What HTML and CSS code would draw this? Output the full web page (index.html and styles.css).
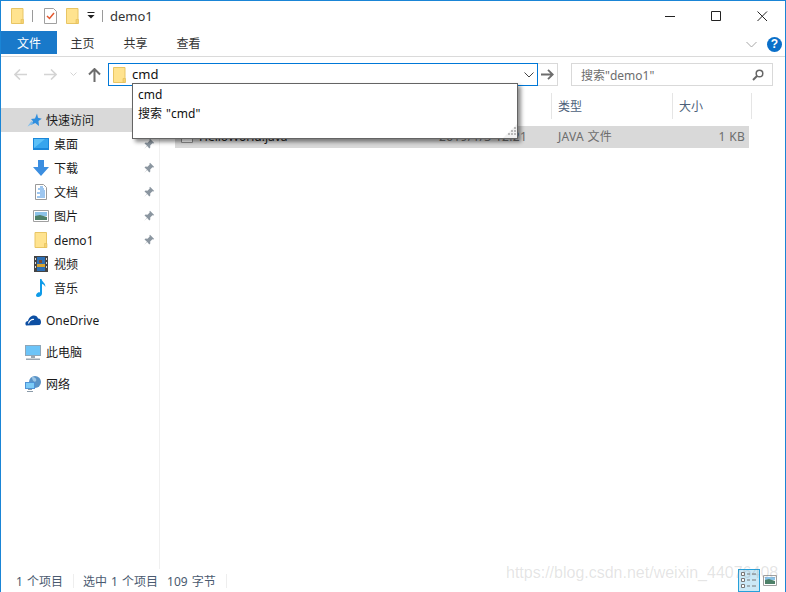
FILE: index.html
```html
<!DOCTYPE html>
<html lang="zh-CN">

<head>
  <meta charset="UTF-8" />
  <title>demo1</title>
  <link rel="stylesheet" href="styles.css">
</head>

<body>
  <svg class="defs" width="0" height="0">
    <symbol id="folder" viewBox="0 0 13 16">
      <path d="M.5.5h11.5v15H.5z" fill="#ffe38f" stroke="#e8c564" />
      <path d="M10 15.5v-4h2.500v4z" fill="#f5d271" stroke="#e3bd58" stroke-width=".6" />
    </symbol>
    <symbol id="pin" viewBox="0 0 12 12">
      <path d="M7 .8l4.200 4.200-1 .6-.8-.3-2.200 2.200.1 2-1 1-2.100-2.600L1 11l3-3.300L1.500 5.600l1-1 2 .1 2.200-2.200-.3-.8z" fill="#8b96a0" />
    </symbol>
  </svg>

  <div class="window">
    <div class="titlebar">
      <svg class="qa-folder" width="13" height="16"><use href="#folder" /></svg>
      <span class="qa-sep"></span>
      <svg class="qa-check" width="13" height="16" viewBox="0 0 13 16">
        <path d="M.5.500h9l3 3v12H.5z" fill="#fff" stroke="#a0a0a0" />
        <path d="M3 8l2.500 2.500L10 5" fill="none" stroke="#e4572e" stroke-width="1.500" />
      </svg>
      <svg class="qa-folder2" width="13" height="16"><use href="#folder" /></svg>
      <svg class="qa-more" width="8" height="8" viewBox="0 0 8 8">
        <path d="M.5 0h7v1h-7zM.5 3h7L4 6.500z" fill="#222" />
      </svg>
      <span class="qa-sep sep2"></span>
      <span class="title-text">demo1</span>
      <div class="win-btns">
        <svg width="11" height="11" viewBox="0 0 11 11"><path d="M0 5.500h10" stroke="#222" fill="none" /></svg>
        <svg width="11" height="11" viewBox="0 0 11 11"><path d="M.5.500h9v9h-9z" stroke="#222" fill="none" /></svg>
        <svg width="11" height="11" viewBox="0 0 11 11"><path d="M.5.500l9.500 9.500M10 .5L.5 10" stroke="#222" fill="none" /></svg>
      </div>
    </div>

    <div class="ribbon">
      <div class="tab tab-file">文件</div>
      <div class="tab">主页</div>
      <div class="tab">共享</div>
      <div class="tab">查看</div>
      <svg class="ribbon-chev" width="11" height="7" viewBox="0 0 11 7"><path d="M.5 1l5 5 5-5" stroke="#a6a6a6" fill="none" /></svg>
      <div class="help">?</div>
    </div>

    <div class="navbar">
      <svg class="nav-back" width="13" height="11" viewBox="0 0 13 11"><path d="M6 .5l-5 5 5 5M1 5.500h12" stroke="#d4d4d4" stroke-width="1.600" fill="none" /></svg>
      <svg class="nav-fwd" width="13" height="11" viewBox="0 0 13 11"><path d="M7 .5l5 5-5 5M12 5.500H0" stroke="#d4d4d4" stroke-width="1.600" fill="none" /></svg>
      <svg class="nav-down" width="7" height="5" viewBox="0 0 7 5"><path d="M.5.500l3 3 3-3" stroke="#d4d4d4" fill="none" /></svg>
      <svg class="nav-up" width="13" height="14" viewBox="0 0 13 14"><path d="M1 6.500l5.500-5.500 5.500 5.500M6.500 1.500V14" stroke="#6d6d6d" stroke-width="2" fill="none" /></svg>
      <div class="address">
        <svg width="13" height="16"><use href="#folder" /></svg>
        <span class="address-text">cmd</span>
        <svg class="address-chev" width="10" height="6" viewBox="0 0 10 6"><path d="M.5.500L5 5 9.500.5" stroke="#444" fill="none" /></svg>
      </div>
      <div class="go">
        <svg width="13" height="11" viewBox="0 0 13 11"><path d="M7 .8l4.800 4.700L7 10.200M11 5.500H0" stroke="#6d6d6d" stroke-width="1.800" fill="none" /></svg>
      </div>
      <div class="search">
        <span>搜索"demo1"</span>
        <svg width="12" height="12" viewBox="0 0 12 12"><circle cx="7.500" cy="4.500" r="3.300" stroke="#666" stroke-width="1.500" fill="none" /><path d="M5 7L1 11" stroke="#666" stroke-width="2" /></svg>
      </div>
    </div>

    <div class="panes">
      <div class="sidebar">
        <div class="side-item top active">
          <svg width="15" height="14" viewBox="0 0 15 14"><path d="M10 .5l1 4.300 3.800.9-3.300 2.300.5 5-3.800-3L4 12l2-3.800L4 6l4-.5z" fill="#2f8ede" /><path d="M4.500 8L.5 13.500 6 10.500z" fill="#7fbdec" /></svg>
          <span>快速访问</span>
        </div>
        <div class="side-item sub">
          <svg width="16" height="14" viewBox="0 0 16 14"><path d="M0 1h16v12H0z" fill="#1a86d9" /><path d="M1 2h14v9H1z" fill="#5cc0f7" /><path d="M1 11L12 2h3v9z" fill="#36a5ee" /></svg>
          <span>桌面</span>
          <svg class="pin" width="12" height="12"><use href="#pin" /></svg>
        </div>
        <div class="side-item sub">
          <svg width="16" height="16" viewBox="0 0 16 16"><path d="M5 0h6v7h5l-8 9-8-9h5z" fill="#3c8ee0" /></svg>
          <span>下载</span>
          <svg class="pin" width="12" height="12"><use href="#pin" /></svg>
        </div>
        <div class="side-item sub">
          <svg width="16" height="16" viewBox="0 0 16 16"><path d="M2.500.5h8l3 3v12h-11z" fill="#fff" stroke="#9a9a9a" /><path d="M7 3h3M5 5h6M7 7h5M4 9h8M7 11h5M4 13h8" stroke="#3c8ee0" /></svg>
          <span>文档</span>
          <svg class="pin" width="12" height="12"><use href="#pin" /></svg>
        </div>
        <div class="side-item sub">
          <svg width="16" height="12" viewBox="0 0 16 12"><path d="M.5.500h15v11H.5z" fill="#fff" stroke="#a0a0a0" /><path d="M2 2h12v4H2z" fill="#8cc3e8" /><path d="M2 6l5-1 7 2v3H2z" fill="#4d8068" /></svg>
          <span>图片</span>
          <svg class="pin" width="12" height="12"><use href="#pin" /></svg>
        </div>
        <div class="side-item sub">
          <svg width="13" height="16"><use href="#folder" /></svg>
          <span class="name-gap">demo1</span>
          <svg class="pin" width="12" height="12"><use href="#pin" /></svg>
        </div>
        <div class="side-item sub">
          <svg width="14" height="16" viewBox="0 0 14 16"><path d="M0 0h14v16H0z" fill="#444" /><path d="M3 1h8v14H3z" fill="#2c6fb5" /><path d="M3 8h8v3H3z" fill="#d9a531" /><path d="M5 4h3v3H5z" fill="#7c4b2e" /><path d="M1 2h1v2H1zM1 6h1v2H1zM1 10h1v2H1zM12 2h1v2h-1zM12 6h1v2h-1zM12 10h1v2h-1z" fill="#ddd" /></svg>
          <span>视频</span>
        </div>
        <div class="side-item sub">
          <svg width="14" height="18" viewBox="0 0 14 18"><path d="M6 0h1.500c.4 3 4.500 4 3.800 8-.8-2-2.300-3-3.300-3v9.500c0 2-2 3.500-4 3.500S1.500 16.500 2.500 15 5 13 6 13.500z" fill="#0f9be8" /></svg>
          <span>音乐</span>
        </div>

        <div class="side-item top group">
          <svg width="16" height="11" viewBox="0 0 16 11"><path d="M1 10.500C-.5 8 1 6 3 6c.5-3 3-5.500 6-5.500 2 0 3.500 1.300 4 3 2-.2 3 1.500 3 3.500 0 1.500-.5 2.500-1.500 3z" fill="#0d4fa3" /><path d="M3.500 8.500C4 6 6.500 4 9 4.500" stroke="#fff" stroke-width="1.200" fill="none" /></svg>
          <span>OneDrive</span>
        </div>
        <div class="side-item top group">
          <svg width="16" height="15" viewBox="0 0 16 15"><path d="M0 0h16v11H0z" fill="#8fa6b8" /><path d="M1 1h14v9H1z" fill="#6cc4f8" /><path d="M6 11h4v2H6zM1 13.500h14v1.500H1z" fill="#9aa7b2" /></svg>
          <span>此电脑</span>
        </div>
        <div class="side-item top group">
          <svg width="16" height="16" viewBox="0 0 16 16"><circle cx="10" cy="6" r="6" fill="#5a93c6" /><path d="M7 1c3 0 5 2 4 4s-4 0-4-4z" fill="#9cc6e6" /><path d="M0 6h10v7H0z" fill="#4f93d6" /><path d="M1 7h8v5H1z" fill="#7ccbf7" /><path d="M3 13h4v1H3zM2 15h6v1H2z" fill="#8a9aa8" /></svg>
          <span>网络</span>
        </div>
      </div>

      <div class="main">
        <div class="cols head">
          <div></div>
          <div></div>
          <div>类型</div>
          <div>大小</div>
        </div>
        <div class="cols row">
          <div class="file-name">
            <svg width="12" height="14" viewBox="0 0 12 14"><path d="M.5.500h11v13H.5z" fill="#fff" stroke="#8f8f8f" /></svg>
            <span>HelloWorld.java</span>
          </div>
          <div class="muted">2019/1/3 12:21</div>
          <div class="muted">JAVA 文件</div>
          <div class="muted size">1 KB</div>
        </div>
      </div>
    </div>

    <div class="status">
      <span class="st-count">1 个项目</span>
      <span class="st-sep"></span>
      <span class="st-sel">选中 1 个项目</span>
      <span class="st-bytes">109 字节</span>
      <span class="st-sep"></span>
      <div class="views">
        <div class="view-on">
          <svg width="16" height="17" viewBox="0 0 16 17"><path d="M.5.500h3v3h-3zM.5 6.500h3v3h-3zM.5 12.500h3v3h-3z" fill="#fff" stroke="#777" /><path d="M6 2h3M11 2h4M6 8h3M11 8h4M6 14h3M11 14h4" stroke="#777" /></svg>
        </div>
        <svg width="14" height="11" viewBox="0 0 14 11"><path d="M.5.500h13v10H.5z" fill="#fff" stroke="#a0a0a0" /><path d="M2 2h10v3H2z" fill="#8cc3e8" /><path d="M2 5l4-1 6 2v3H2z" fill="#4d8068" /></svg>
      </div>
    </div>

    <div class="popup">
      <div>cmd</div>
      <div>搜索 "cmd"</div>
      <svg class="grip" width="14" height="14" viewBox="0 0 14 14">
        <path d="M0 14L14 0v14z" fill="#f1f1f1" />
        <path d="M11 3h2v2h-2zM8 6h2v2H8zM11 6h2v2h-2zM5 9h2v2H5zM8 9h2v2H8zM11 9h2v2h-2z" fill="#b9b9b9" />
      </svg>
    </div>

    <div class="watermark">https://blog.csdn.net/weixin_44076408</div>
  </div>
</body>

</html>
```

FILE: styles.css
```css
* {
  box-sizing: border-box;
}

html,
body {
  margin: 0;
  height: 100%;
  overflow: hidden;
}

body {
  font-family: "Noto Sans", "Noto Sans CJK SC", sans-serif;
  font-size: 12px;
  color: #1a1a1a;
  background: #fff;
}

.defs {
  position: absolute;
}

svg {
  display: block;
  flex: none;
}

.window {
  position: relative;
  display: flex;
  flex-direction: column;
  height: 592px;
  border: 1px solid #1a85d6;
  border-bottom: 0;
  background: #fff;
}

/* title bar */
.titlebar {
  display: flex;
  align-items: center;
  height: 30px;
  padding-left: 10px;
}

.qa-sep {
  width: 1px;
  height: 12px;
  margin-left: 8px;
  background: #9a9a9a;
}

.qa-check {
  margin-left: 11px;
}

.qa-folder2 {
  margin-left: 9px;
}

.qa-more {
  margin-left: 8px;
}

.sep2 {
  margin-left: 7px;
}

.title-text {
  margin-left: 7px;
  font-size: 13px;
  color: #333;
}

.win-btns {
  display: flex;
  gap: 35px;
  margin-left: auto;
  margin-right: 17px;
}

/* ribbon */
.ribbon {
  display: flex;
  align-items: flex-start;
  height: 26px;
  border-bottom: 1px solid #dadada;
}

.tab {
  width: 53px;
  height: 23px;
  line-height: 25px;
  text-align: center;
  color: #333;
}

.tab-file {
  width: 56px;
  margin-right: -1px;
  color: #fff;
  background: #1979ca;
}

.ribbon-chev {
  margin-left: auto;
  margin-top: 10px;
}

.help {
  width: 15px;
  height: 15px;
  margin: 6px 3px 0 10px;
  border-radius: 50%;
  background: #0a6fc9;
  color: #fff;
  font: bold 12px/15px "Liberation Sans", sans-serif;
  text-align: center;
}

/* navigation row */
.navbar {
  display: flex;
  align-items: center;
  height: 23px;
  margin-top: 6px;
  padding-left: 13px;
}

.nav-fwd {
  margin-left: 17px;
}

.nav-down {
  margin-left: 13px;
}

.nav-up {
  margin-left: 11px;
}

.address {
  display: flex;
  align-items: center;
  width: 430px;
  height: 23px;
  margin-left: 7px;
  padding-left: 4px;
  border: 1px solid #0078d7;
}

.address-text {
  margin-left: 6px;
  padding-bottom: 2px;
  font-size: 13px;
  color: #111;
}

.address-chev {
  margin-left: auto;
  margin-right: 3px;
}

.go {
  display: flex;
  align-items: center;
  justify-content: center;
  width: 20px;
  height: 23px;
  border: 1px solid #d9d9d9;
  border-left: 0;
}

.search {
  display: flex;
  align-items: center;
  justify-content: space-between;
  width: 202px;
  height: 23px;
  margin-left: 13px;
  padding: 0 8px 0 9px;
  border: 1px solid #d9d9d9;
  color: #6d6d6d;
}

/* panes */
.panes {
  display: flex;
  flex: 1;
  min-height: 0;
  margin-top: 7px;
}

.sidebar {
  width: 159px;
  padding-top: 15px;
  border-right: 1px solid #f0f0f0;
}

.side-item {
  display: flex;
  align-items: center;
  height: 24px;
  color: #1a1a1a;
}

.side-item.top {
  padding-left: 24px;
  gap: 5px;
}

.side-item.sub {
  padding-left: 32px;
}

.side-item.sub > span {
  margin-left: 5px;
}

.side-item.sub > svg:first-child {
  width: 16px;
}

.side-item.active {
  background: #d9d9d9;
  padding-left: 26px;
  gap: 4px;
}

.side-item.group {
  margin-top: 8px;
}

.pin {
  margin-left: auto;
  margin-right: 4px;
}

.main {
  flex: 1;
  padding-left: 15px;
}

.cols {
  display: grid;
  grid-template-columns: 258px 119px 121px 79px;
  width: 577px;
}

.head {
  height: 26px;
  color: #4c607a;
}

.head > div {
  display: flex;
  align-items: center;
  padding-left: 6px;
  border-right: 1px solid #e5e5e5;
}

.head > div:first-child {
  border-right: 0;
}

.row {
  grid-template-columns: 258px 119px 121px 76px;
  width: 574px;
  align-items: center;
  height: 22px;
  margin-top: 7px;
  padding-bottom: 2px;
  background: #d9d9d9;
}

.row > div {
  padding-left: 6px;
}

.file-name {
  display: flex;
  align-items: center;
  gap: 6px;
  color: #222;
}

.muted {
  letter-spacing: 0.3px;
  color: #6d6d6d;
}

.size {
  padding-right: 4px;
  text-align: right;
}

/* status bar */
.status {
  display: flex;
  align-items: center;
  height: 23px;
  padding-left: 15px;
  word-spacing: 1px;
  color: #4a5a70;
}

.st-sep {
  width: 1px;
  height: 14px;
  margin: 0 10px;
  background: #eeeeee;
}

.st-count + .st-sep {
  margin-right: 9px;
}

.st-bytes {
  margin-left: 9px;
}

.views {
  display: flex;
  align-items: center;
  gap: 3px;
  margin-left: auto;
  margin-right: 8px;
}

.view-on {
  display: flex;
  align-items: center;
  justify-content: center;
  width: 22px;
  height: 23px;
  border: 1px solid #26a0da;
  background: #cbe8f6;
}

/* things lying over the panes */
.popup {
  position: absolute;
  left: 131px;
  top: 82px;
  width: 386px;
  height: 56px;
  padding: 1px 5px;
  border: 1px solid #646464;
  background: #fff;
  box-shadow: 3px 3px 4px rgba(0, 0, 0, 0.45);
  font-size: 12px;
  line-height: 19px;
  word-spacing: 1px;
  color: #111;
}

.grip {
  position: absolute;
  right: 0;
  bottom: 0;
}

.watermark {
  position: absolute;
  left: 505px;
  top: 563px;
  font: 16px "Liberation Sans", sans-serif;
  color: rgba(120, 120, 120, 0.2);
  white-space: nowrap;
}
```
